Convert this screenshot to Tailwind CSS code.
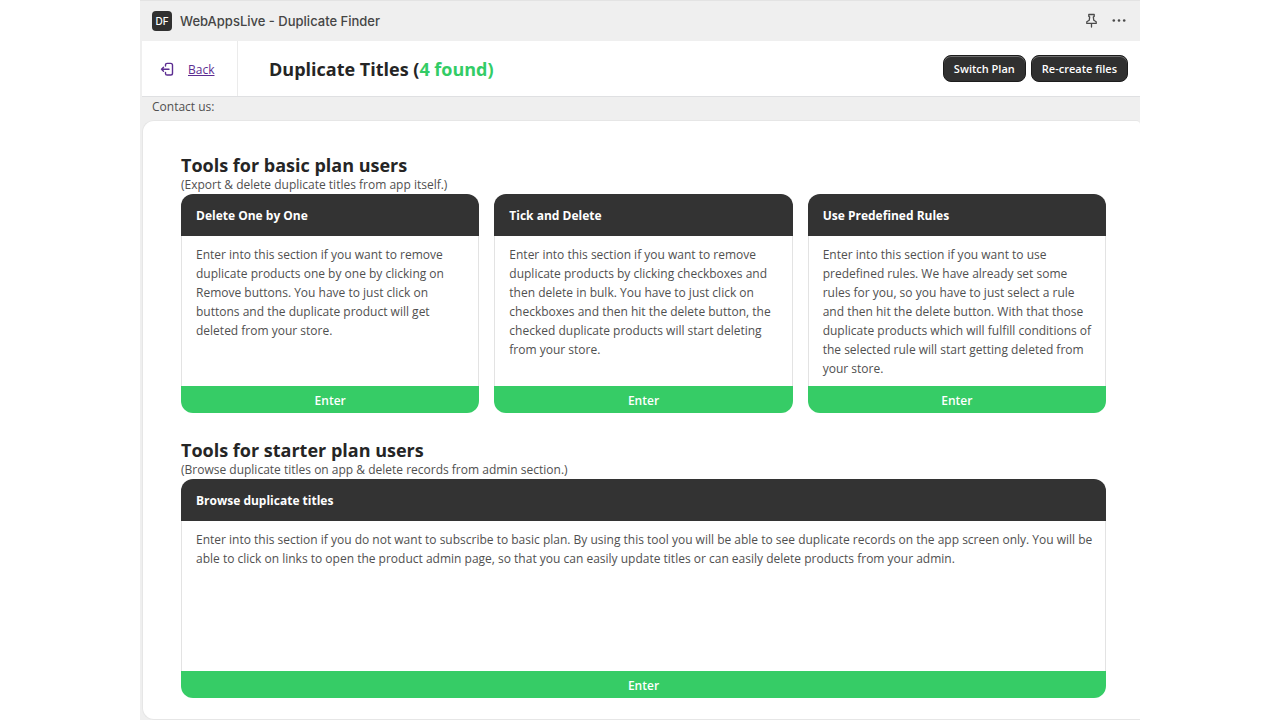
<!DOCTYPE html>
<html lang="en">
  <head>
    <meta charset="UTF-8" />
    <meta name="viewport" content="width=device-width, initial-scale=1.0" />
    <title>WebAppsLive - Duplicate Finder</title>
    <script src="https://cdn.jsdelivr.net/npm/@tailwindcss/browser@4"></script>
  </head>

  <body class="bg-white font-['Open_Sans','Noto_Sans',sans-serif] text-xs leading-5 text-[#505050]">
    <div class="mx-auto flex min-h-screen w-full max-w-[1000px] flex-col bg-[#efefef]">
      <!-- App bar -->
      <header class="flex h-[41px] items-center border-t border-[#e3e3e3] px-3 font-['Inter',sans-serif] text-[#303030]">
        <span class="flex size-5 items-center justify-center rounded bg-[#303030] text-[10px] font-medium text-white">DF</span>
        <span class="ml-2 text-[13px] font-medium text-[#454545]">WebAppsLive - Duplicate Finder</span>
        <div class="ml-auto flex items-center gap-3">
          <button type="button" aria-label="Pin app">
            <svg class="size-4" viewBox="0 0 16 16" fill="none" stroke="#4a4a4a" stroke-width="1.3" stroke-linecap="round" stroke-linejoin="round">
              <path d="M4.8 1.5h5.400v1.900l-.9.600.5 3.300 2.400 1.400v1.700H2.800V8.700l2.400-1.400.5-3.300-.9-.6zM7.500 10.400V14" />
            </svg>
          </button>
          <button type="button" aria-label="More actions">
            <svg class="size-4" viewBox="0 0 16 16" fill="#4a4a4a">
              <circle cx="1.800" cy="7.500" r="1.300" />
              <circle cx="7" cy="7.500" r="1.300" />
              <circle cx="12.200" cy="7.500" r="1.300" />
            </svg>
          </button>
        </div>
      </header>

      <!-- Title bar -->
      <div class="ml-0.5 flex h-14 items-center border-b border-[#dfe0e2] bg-white pr-3">
        <a href="#" class="flex h-full w-24 items-center gap-3 border-r border-[#ebebeb] pl-[18px] pt-0.5 text-[#5c2d91]">
          <svg class="size-4" viewBox="0 0 16 16" fill="none" stroke="currentColor" stroke-width="1.4" stroke-linecap="round" stroke-linejoin="round">
            <path d="M5.500 4V3a1.600 1.600 0 0 1 1.600-1.600h3.600A1.800 1.800 0 0 1 12.500 3.200v8A1.800 1.800 0 0 1 10.700 13H7.100a1.600 1.600 0 0 1-1.600-1.600v-1M9 7.200H1.500M3.500 5.200l-2 2 2 2" />
          </svg>
          <span class="underline">Back</span>
        </a>
        <h1 class="ml-[31px] pt-px text-lg font-bold text-[#252525]">Duplicate Titles (<span class="text-[#33cc66]">4 found)</span></h1>
        <div class="ml-auto flex gap-[5px] text-[11px] font-semibold text-white">
          <button type="button" class="h-[27px] rounded-lg border border-[#1c1c1c] bg-[#303030] px-2.5 pt-px inset-shadow-2xs inset-shadow-white/30">Switch Plan</button>
          <button type="button" class="h-[27px] rounded-lg border border-[#1c1c1c] bg-[#303030] px-2.5 pt-px inset-shadow-2xs inset-shadow-white/30">Re-create files</button>
        </div>
      </div>

      <p class="px-3 pb-[3px]">Contact us:</p>

      <main class="ml-0.5 flex-1 rounded-l-xl rounded-tr-sm border border-r-0 border-[#e6e6e6] bg-white pb-[21px] pl-[38px] pr-[34px] pt-[34px]">
        <section>
          <h2 class="text-lg leading-5 font-bold text-[#252525]">Tools for basic plan users</h2>
          <p class="leading-[19px]">(Export &amp; delete duplicate titles from app itself.)</p>
          <div class="grid grid-cols-3 gap-[15px]">
            <article class="flex flex-col overflow-hidden rounded-xl">
              <h3 class="bg-[#333] px-[15px] pt-3 pb-2.5 font-bold text-white">Delete One by One</h3>
              <p class="min-h-[150px] flex-1 border-x border-[#e3e3e3] pl-3.5 pr-2.5 pt-[9px] leading-[19px]">Enter into this section if you want to remove duplicate products one by one by clicking on Remove buttons. You have to just click on buttons and the duplicate product will get deleted from your store.</p>
              <button type="button" class="h-[27px] bg-[#36cc66] pt-0.5 font-semibold text-white">Enter</button>
            </article>
            <article class="flex flex-col overflow-hidden rounded-xl">
              <h3 class="bg-[#333] px-[15px] pt-3 pb-2.5 font-bold text-white">Tick and Delete</h3>
              <p class="min-h-[150px] flex-1 border-x border-[#e3e3e3] pl-3.5 pr-2.5 pt-[9px] leading-[19px]">Enter into this section if you want to remove duplicate products by clicking checkboxes and then delete in bulk. You have to just click on checkboxes and then hit the delete button, the checked duplicate products will start deleting from your store.</p>
              <button type="button" class="h-[27px] bg-[#36cc66] pt-0.5 font-semibold text-white">Enter</button>
            </article>
            <article class="flex flex-col overflow-hidden rounded-xl">
              <h3 class="bg-[#333] px-[15px] pt-3 pb-2.5 font-bold text-white">Use Predefined Rules</h3>
              <p class="min-h-[150px] flex-1 border-x border-[#e3e3e3] pl-3.5 pr-2.5 pt-[9px] leading-[19px]">Enter into this section if you want to use predefined rules. We have already set some rules for you, so you have to just select a rule and then hit the delete button. With that those duplicate products which will fulfill conditions of the selected rule will start getting deleted from your store.</p>
              <button type="button" class="h-[27px] bg-[#36cc66] pt-0.5 font-semibold text-white">Enter</button>
            </article>
          </div>
        </section>

        <section class="mt-[27px]">
          <h2 class="text-lg leading-5 font-bold text-[#252525]">Tools for starter plan users</h2>
          <p class="leading-[19px]">(Browse duplicate titles on app &amp; delete records from admin section.)</p>
          <article class="flex flex-col overflow-hidden rounded-xl">
            <h3 class="bg-[#333] px-[15px] pt-3 pb-2.5 font-bold text-white">Browse duplicate titles</h3>
            <p class="min-h-[150px] flex-1 border-x border-[#e3e3e3] pl-3.5 pr-2.5 pt-[9px] leading-[19px]">Enter into this section if you do not want to subscribe to basic plan. By using this tool you will be able to see duplicate records on the app screen only. You will be able to click on links to open the product admin page, so that you can easily update titles or can easily delete products from your admin.</p>
            <button type="button" class="h-[27px] bg-[#36cc66] pt-0.5 font-semibold text-white">Enter</button>
          </article>
        </section>
      </main>
    </div>
  </body>
</html>
